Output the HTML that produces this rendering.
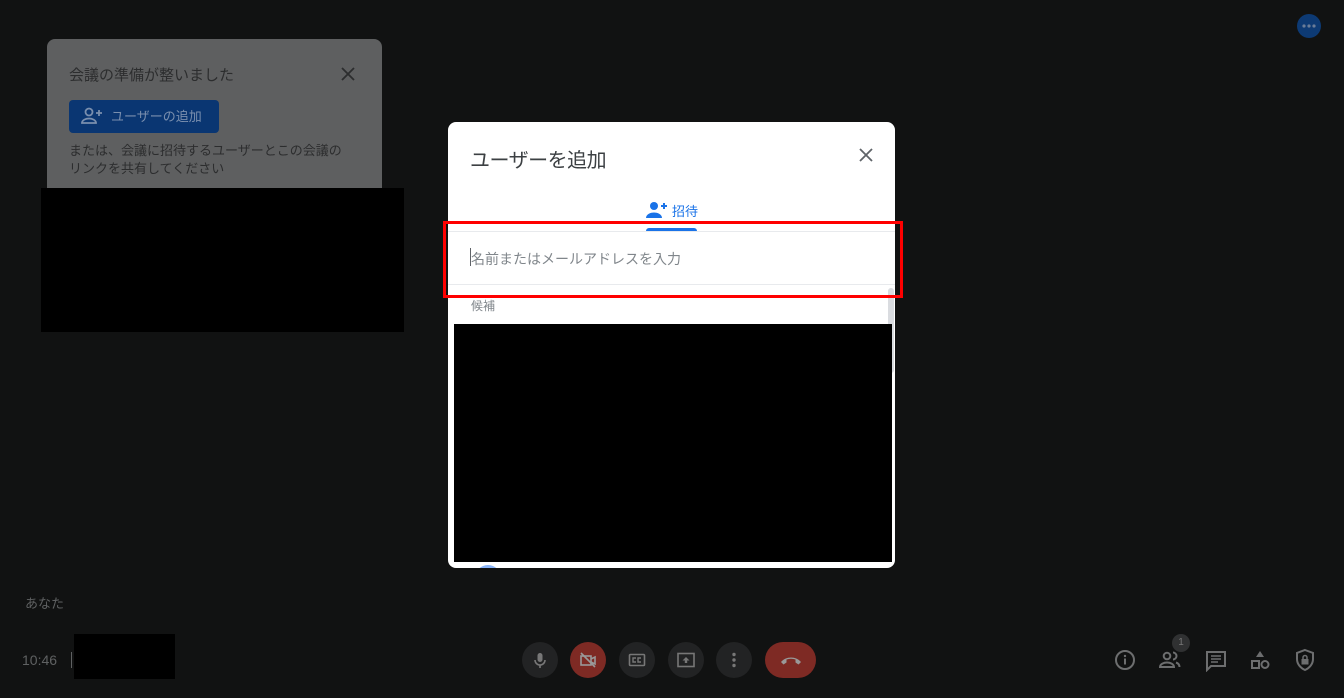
<!DOCTYPE html>
<html><head><meta charset="utf-8"><style>
*{margin:0;padding:0;box-sizing:border-box}
body{width:1344px;height:698px;background:#111212;position:relative;overflow:hidden;font-family:"Liberation Sans","Noto Sans CJK JP",sans-serif}
.abs{position:absolute}
.card{left:47px;top:39px;width:335px;height:160px;background:#5e5f60;border-radius:8px}
.btn{left:69px;top:100px;width:150px;height:33px;background:#0a3672;border-radius:4px;color:#7a8fae;font-size:13px;line-height:33px;padding-left:42px}
.dlg{left:448px;top:122px;width:447px;height:446px;background:#fff;border-radius:8px;overflow:hidden}
.ic{width:36px;height:36px;border-radius:50%;background:#222324}
.ic svg{position:absolute;left:9px;top:9px}
</style></head><body>
<div class="abs card"></div>
<div class="abs" style="left:69px;top:64px;color:#2c2d2e;font-size:15px">会議の準備が整いました</div>
<svg class="abs" style="left:341px;top:67px" width="14" height="14" viewBox="0 0 14 14"><path d="M1 1L13 13M13 1L1 13" stroke="#2c2d2e" stroke-width="1.8"/></svg>
<div class="abs btn">ユーザーの追加</div>
<svg class="abs" style="left:80px;top:106px" width="24" height="20" viewBox="0 0 24 20"><circle cx="9" cy="6" r="3.5" fill="none" stroke="#7a8fae" stroke-width="1.8"/><path d="M2 17c0-3 4-4.5 7-4.5s7 1.5 7 4.5z" fill="none" stroke="#7a8fae" stroke-width="1.8"/><path d="M19 4v6M16 7h6" stroke="#7a8fae" stroke-width="1.8"/></svg>
<div class="abs" style="left:69px;top:142px;color:#2c2d2e;font-size:13px;line-height:18px;width:300px">または、会議に招待するユーザーとこの会議の<br>リンクを共有してください</div>
<div class="abs" style="left:41px;top:188px;width:363px;height:144px;background:#000"></div>

<svg class="abs" style="left:1297px;top:14px" width="24" height="24" viewBox="0 0 24 24"><circle cx="12" cy="12" r="12" fill="#0d3a74"/><circle cx="7" cy="12" r="1.6" fill="#6a7c98"/><circle cx="12" cy="12" r="1.6" fill="#6a7c98"/><circle cx="17" cy="12" r="1.6" fill="#6a7c98"/></svg>

<div class="abs dlg">
 <div class="abs" style="left:22px;top:22px;font-size:20px;color:#3c4043;letter-spacing:-0.5px">ユーザーを追加</div>
 <svg class="abs" style="left:411px;top:26px" width="14" height="14" viewBox="0 0 14 14"><path d="M1 1L13 13M13 1L1 13" stroke="#5f6368" stroke-width="1.8"/></svg>
 <svg class="abs" style="left:197px;top:78px" width="24" height="20" viewBox="0 0 24 20"><circle cx="9" cy="6" r="4" fill="#1a73e8"/><path d="M1 18c0-4 5-5.5 8-5.5s8 1.5 8 5.5z" fill="#1a73e8"/><path d="M19 3v6M16 6h6" stroke="#1a73e8" stroke-width="2"/></svg>
 <div class="abs" style="left:224px;top:79px;font-size:13px;color:#1a73e8">招待</div>
 <div class="abs" style="left:198px;top:106px;width:51px;height:3px;background:#1a73e8;border-radius:3px 3px 0 0"></div>
 <div class="abs" style="left:0;top:109px;width:447px;height:1px;background:#e8eaed"></div>
 <div class="abs" style="left:22px;top:126px;width:1px;height:18px;background:#5f6368"></div>
 <div class="abs" style="left:23px;top:127px;font-size:14px;color:#80868b">名前またはメールアドレスを入力</div>
 <div class="abs" style="left:0;top:162px;width:447px;height:1px;background:#e8eaed"></div>
 <div class="abs" style="left:23px;top:175px;font-size:12px;color:#80868b">候補</div>
 <div class="abs" style="left:440px;top:166px;width:6px;height:85px;background:#dadce0;border-radius:3px"></div>
 <div class="abs" style="left:6px;top:202px;width:438px;height:238px;background:#000"></div>
 <div class="abs" style="left:27px;top:443px;width:26px;height:26px;border-radius:50%;background:#8ab4f8"></div>
</div>
<div class="abs" style="left:443px;top:221px;width:460px;height:77px;border:3px solid #f00"></div>

<div class="abs" style="left:25px;top:593px;font-size:13px;color:#5f6162">あなた</div>
<div class="abs" style="left:22px;top:652px;font-size:14px;color:#5f6162">10:46</div>
<div class="abs" style="left:71px;top:652px;width:1px;height:16px;background:#5f6162"></div>
<div class="abs" style="left:74px;top:634px;width:101px;height:45px;background:#000"></div>

<div class="abs ic" style="left:522px;top:642px"><svg width="18" height="18" viewBox="0 0 18 18"><rect x="6.5" y="2" width="5" height="9" rx="2.5" fill="#777"/><path d="M4 9a5 5 0 0010 0M9 14v3" stroke="#777" stroke-width="1.6" fill="none"/></svg></div>
<div class="abs ic" style="left:570px;top:642px;background:#7e2a24"><svg width="18" height="18" viewBox="0 0 18 18"><rect x="2" y="5" width="10" height="9" fill="none" stroke="#999" stroke-width="1.6"/><path d="M12 8l4-2v7l-4-2M2 2l14 14" stroke="#999" stroke-width="1.6" fill="none"/></svg></div>
<div class="abs ic" style="left:619px;top:642px"><svg width="18" height="18" viewBox="0 0 18 18"><rect x="1.5" y="3.5" width="15" height="11" rx="1" fill="none" stroke="#777" stroke-width="1.6"/><path d="M8 7H5v4h3M13 7h-3v4h3" stroke="#777" stroke-width="1.4" fill="none"/></svg></div>
<div class="abs ic" style="left:668px;top:642px"><svg width="18" height="18" viewBox="0 0 18 18"><rect x="1" y="2.5" width="16" height="13" fill="none" stroke="#777" stroke-width="1.6"/><path d="M9 6l-3.5 3.5h2.3V12h2.4V9.5h2.3z" fill="#777"/></svg></div>
<div class="abs ic" style="left:716px;top:642px"><svg width="18" height="18" viewBox="0 0 18 18"><circle cx="9" cy="3.5" r="1.7" fill="#777"/><circle cx="9" cy="9" r="1.7" fill="#777"/><circle cx="9" cy="14.5" r="1.7" fill="#777"/></svg></div>
<div class="abs" style="left:765px;top:642px;width:51px;height:36px;border-radius:18px;background:#7e2a24"><svg class="abs" style="left:14px;top:12px" width="24" height="12" viewBox="0 0 24 12"><path d="M2 8c5-6 15-6 20 0l-2.5 2.5-3-2V5.5c-3-1-6-1-9 0v3l-3 2z" fill="#999"/></svg></div>

<svg class="abs" style="left:1114px;top:649px" width="22" height="22" viewBox="0 0 22 22"><circle cx="11" cy="11" r="9" fill="none" stroke="#6d6e6f" stroke-width="2"/><rect x="10" y="9.5" width="2" height="6" fill="#6d6e6f"/><circle cx="11" cy="7" r="1.2" fill="#6d6e6f"/></svg>
<div class="abs" style="left:1172px;top:634px;width:18px;height:18px;border-radius:50%;background:#303132;color:#777;font-size:10px;text-align:center;line-height:18px">1</div>
<svg class="abs" style="left:1158px;top:650px" width="24" height="20" viewBox="0 0 24 20"><circle cx="9" cy="6" r="3.3" fill="none" stroke="#6d6e6f" stroke-width="2"/><path d="M2 17c0-3 4-4.5 7-4.5s7 1.5 7 4.5z" fill="none" stroke="#6d6e6f" stroke-width="2"/><path d="M15 2.5a3.5 3.5 0 010 7M18 12.5c2 .7 3.5 2 3.5 4.5" fill="none" stroke="#6d6e6f" stroke-width="2"/></svg>
<svg class="abs" style="left:1205px;top:650px" width="22" height="22" viewBox="0 0 22 22"><path d="M2 2h18v14H6l-4 4z" fill="none" stroke="#6d6e6f" stroke-width="2"/><path d="M6 6h10M6 9h10M6 12h7" stroke="#6d6e6f" stroke-width="1.6"/></svg>
<svg class="abs" style="left:1249px;top:649px" width="22" height="22" viewBox="0 0 22 22"><path d="M11 2l4 6H7z" fill="#6d6e6f"/><rect x="3" y="12" width="7" height="7" fill="none" stroke="#6d6e6f" stroke-width="2"/><circle cx="16" cy="15.5" r="3.5" fill="none" stroke="#6d6e6f" stroke-width="2"/></svg>
<svg class="abs" style="left:1294px;top:648px" width="22" height="24" viewBox="0 0 22 24"><path d="M11 2l8 3v6c0 5-3.5 9-8 11-4.5-2-8-6-8-11V5z" fill="none" stroke="#6d6e6f" stroke-width="2"/><rect x="7.5" y="11" width="7" height="5.5" fill="#6d6e6f"/><path d="M9 11V9.5a2 2 0 014 0V11" fill="none" stroke="#6d6e6f" stroke-width="1.5"/></svg>
</body></html>
